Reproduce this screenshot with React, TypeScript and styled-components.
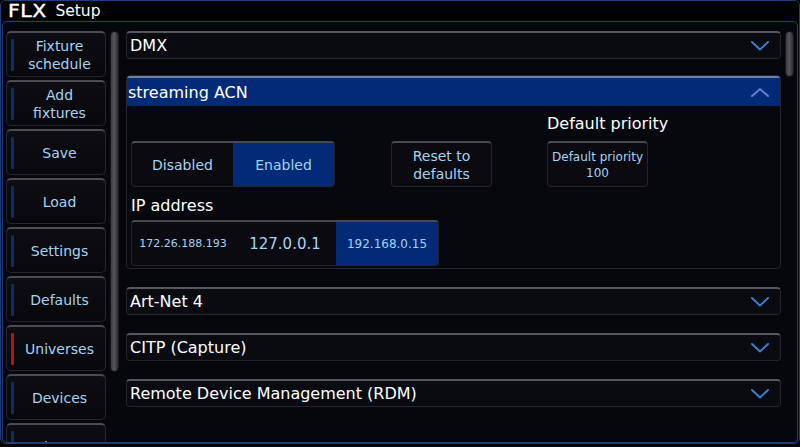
import React from "react";
import styled, { createGlobalStyle } from "styled-components";

const GlobalStyle = createGlobalStyle`
  html, body {
    margin: 0;
    padding: 0;
    background: #000;
  }
  body {
    font-family: "DejaVu Sans", "Liberation Sans", sans-serif;
  }
`;

const sideItems = [
  { label: "Fixture schedule", active: false },
  { label: "Add fixtures", active: false },
  { label: "Save", active: false },
  { label: "Load", active: false },
  { label: "Settings", active: false },
  { label: "Defaults", active: false },
  { label: "Universes", active: true },
  { label: "Devices", active: false },
  { label: "Triggers", active: false },
];

const collapsed = ["Art-Net 4", "CITP (Capture)", "Remote Device Management (RDM)"];

const Chevron: React.FC<{ up?: boolean }> = ({ up }) => (
  <svg width="20" height="12" viewBox="0 0 20 12">
    <path
      d={up ? "M2 10 L10 3 L18 10" : "M2 2 L10 9.5 L18 2"}
      fill="none"
      stroke={up ? "#5d83c4" : "#3f7ad0"}
      strokeWidth="2"
      strokeLinecap="round"
      strokeLinejoin="round"
    />
  </svg>
);

const App: React.FC = () => {
  return (
    <>
      <GlobalStyle />
      <Screen>
        <Window>
          <TitleBar>
            <Logo>FLX</Logo>
            <Title>Setup</Title>
          </TitleBar>
          <Body>
            <Sidebar>
              {sideItems.map((item) => (
                <SideButton key={item.label}>
                  <Marker $active={item.active} />
                  <SideLabel>{item.label}</SideLabel>
                </SideButton>
              ))}
            </Sidebar>
            <ScrollTrack $gap={7}>
              <ScrollThumb $height={341} />
            </ScrollTrack>
            <Content>
              <SectionHeader>
                <HeaderText>DMX</HeaderText>
                <Chevron />
              </SectionHeader>

              <Panel>
                <PanelHeader>
                  <HeaderText>streaming ACN</HeaderText>
                  <Chevron up />
                </PanelHeader>
                <PanelBody>
                  <ControlRow>
                    <Segmented>
                      <Segment $selected={false} $size={14} $width={101}>
                        Disabled
                      </Segment>
                      <Segment $selected $size={14} $width={101}>
                        Enabled
                      </Segment>
                    </Segmented>
                    <ActionButton $size={14}>
                      Reset to
                      <br />
                      defaults
                    </ActionButton>
                    <FieldColumn>
                      <FieldLabel>Default priority</FieldLabel>
                      <ActionButton $size={12}>
                        Default priority
                        <br />
                        100
                      </ActionButton>
                    </FieldColumn>
                  </ControlRow>
                  <FieldLabel>IP address</FieldLabel>
                  <Segmented>
                    <Segment $selected={false} $size={11} $width={102}>
                      172.26.188.193
                    </Segment>
                    <Segment $selected={false} $size={15} $width={102}>
                      127.0.0.1
                    </Segment>
                    <Segment $selected $size={12} $width={102}>
                      192.168.0.15
                    </Segment>
                  </Segmented>
                </PanelBody>
              </Panel>

              {collapsed.map((name) => (
                <SectionHeader key={name}>
                  <HeaderText>{name}</HeaderText>
                  <Chevron />
                </SectionHeader>
              ))}
            </Content>
            <ScrollTrack $gap={0} $lead={4}>
              <ScrollThumb $height={46} />
            </ScrollTrack>
          </Body>
        </Window>
      </Screen>
    </>
  );
};

export default App;

const Screen = styled.div`
  width: 800px;
  height: 447px;
  background: #000;
  overflow: hidden;
`;

const Window = styled.div`
  box-sizing: border-box;
  width: 800px;
  height: 444px;
  display: flex;
  flex-direction: column;
  border: 1px solid #1f3f7c;
  border-radius: 6px;
  background: #06070c;
  overflow: hidden;
`;

const TitleBar = styled.div`
  display: flex;
  align-items: center;
  gap: 8px;
  height: 19px;
  padding-left: 7px;
  background: #020204;
  color: #fff;
`;

const Logo = styled.span`
  display: inline-block;
  font-size: 17px;
  letter-spacing: 0.5px;
  transform: scaleX(1.2);
  transform-origin: left center;
  margin-right: 7px;
  -webkit-text-stroke: 0.4px #fff;
`;

const Title = styled.span`
  font-size: 15.5px;
`;

const Body = styled.div`
  flex: 1;
  display: flex;
  align-items: flex-start;
  margin: 1px 1px 0 1px;
  padding: 9px 3px 0 3px;
  border: 1px solid #1f3f7c;
  border-radius: 5px;
  background: #06070d;
  overflow: hidden;
`;

const Sidebar = styled.div`
  display: flex;
  flex-direction: column;
  gap: 3px;
  width: 100px;
  flex-shrink: 0;
  margin-right: 4px;
`;

const SideButton = styled.div`
  box-sizing: border-box;
  height: 46px;
  display: flex;
  align-items: center;
  padding-left: 4px;
  border: 1px solid #26262b;
  border-top: 2px solid #4c4c52;
  border-radius: 5px;
  background: linear-gradient(#0d0d12, #08080c);
`;

const Marker = styled.div<{ $active: boolean }>`
  width: 3px;
  height: 32px;
  border-radius: 1px;
  background: ${(p) => (p.$active ? "#b0141a" : "#0f2c63")};
`;

const SideLabel = styled.div`
  flex: 1;
  padding: 0 6px;
  text-align: center;
  color: #a6d3f2;
  font-size: 14px;
  line-height: 18px;
`;

const ScrollTrack = styled.div<{ $gap: number; $lead?: number }>`
  width: 9px;
  flex-shrink: 0;
  margin-right: ${(p) => p.$gap}px;
  margin-left: ${(p) => p.$lead ?? 0}px;
`;

const ScrollThumb = styled.div<{ $height: number }>`
  box-sizing: border-box;
  height: ${(p) => p.$height}px;
  border-radius: 5px;
  border: 1px solid #1a1a1e;
  background: linear-gradient(90deg, #3a3a40, #55555b 45%, #2c2c31);
`;

const Content = styled.div`
  flex: 1;
  display: flex;
  flex-direction: column;
  gap: 18px;
`;

const SectionHeader = styled.div`
  box-sizing: border-box;
  height: 28px;
  display: flex;
  align-items: center;
  justify-content: space-between;
  padding: 0 10px 0 3px;
  border: 1px solid #24242a;
  border-top: 2px solid #56565c;
  border-radius: 4px;
  background: #0a0b11;
`;

const HeaderText = styled.span`
  color: #fff;
  font-size: 16px;
`;

const Panel = styled.div`
  box-sizing: border-box;
  margin-top: -2px;
  border: 1px solid #26262c;
  border-radius: 4px;
  background: #07080e;
  overflow: hidden;
`;

const PanelHeader = styled.div`
  box-sizing: border-box;
  height: 30px;
  display: flex;
  align-items: center;
  justify-content: space-between;
  padding: 0 10px 0 1px;
  border-top: 2px solid #6c7fa8;
  background: #022a77;
`;

const PanelBody = styled.div`
  display: flex;
  flex-direction: column;
  align-items: flex-start;
  padding: 3px 4px 2px 4px;
`;

const ControlRow = styled.div`
  display: flex;
  align-items: flex-end;
  gap: 56px;
  margin-bottom: 4px;
`;

const FieldColumn = styled.div`
  display: flex;
  flex-direction: column;
  gap: 3px;
  margin-left: -1px;
`;

const FieldLabel = styled.div`
  color: #fff;
  font-size: 16px;
  line-height: 22px;
  margin-top: 4px;
  margin-bottom: 3px;
`;

const Segmented = styled.div`
  box-sizing: border-box;
  display: flex;
  height: 46px;
  border: 1px solid #24242a;
  border-top: 2px solid #48484e;
  border-radius: 4px;
  background: #0a0a10;
  overflow: hidden;
`;

const Segment = styled.div<{ $selected: boolean; $size: number; $width: number }>`
  width: ${(p) => p.$width}px;
  display: flex;
  align-items: center;
  justify-content: center;
  color: #a6d3f2;
  font-size: ${(p) => p.$size}px;
  background: ${(p) => (p.$selected ? "#022a77" : "transparent")};
`;

const ActionButton = styled.div<{ $size: number }>`
  box-sizing: border-box;
  width: 101px;
  height: 46px;
  display: flex;
  align-items: center;
  justify-content: center;
  text-align: center;
  color: #a6d3f2;
  font-size: ${(p) => p.$size}px;
  line-height: ${(p) => p.$size + 4}px;
  border: 1px solid #24242a;
  border-top: 2px solid #48484e;
  border-radius: 4px;
  background: #0a0a10;
`;
